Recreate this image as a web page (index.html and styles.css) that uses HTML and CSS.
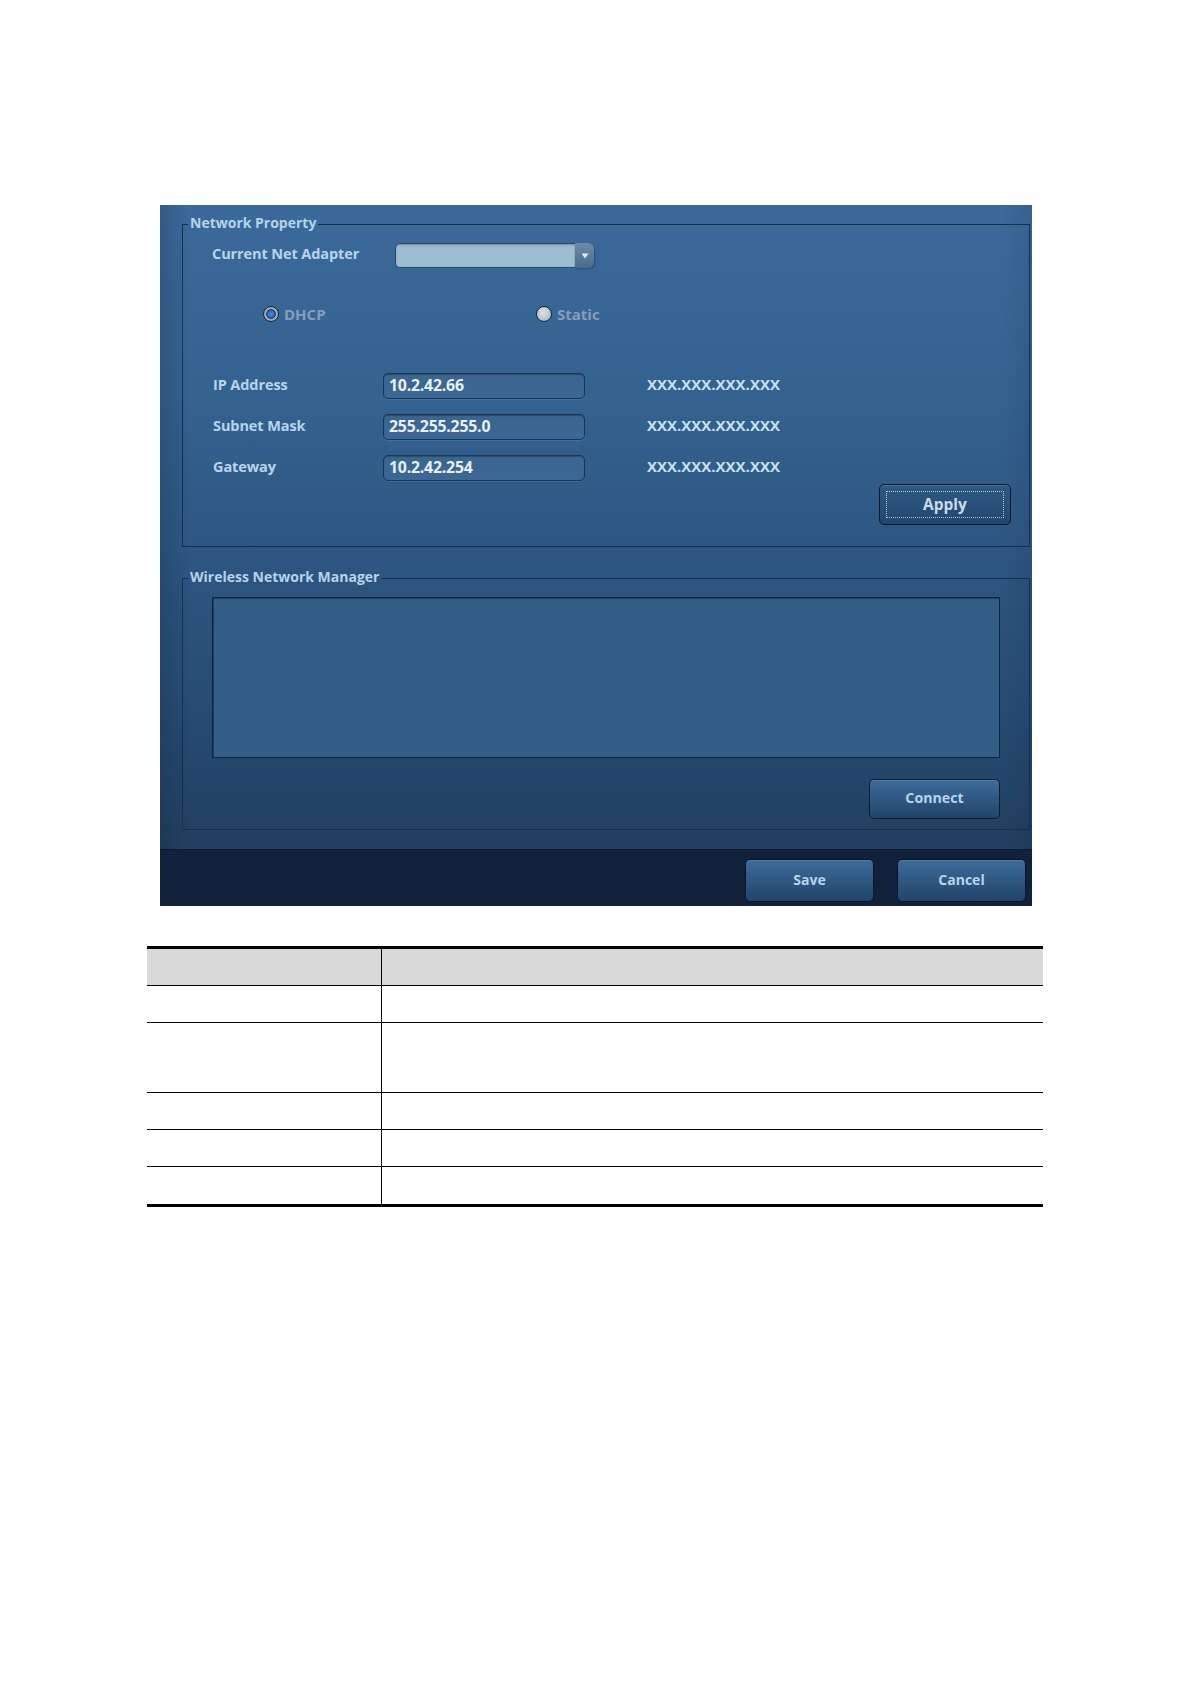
FILE: index.html
```html
<!DOCTYPE html>
<html lang="en">
<head>
<meta charset="utf-8">
<title>Network Property</title>
<link rel="stylesheet" href="styles.css">
</head>
<body>
<div class="page">
  <div class="dialog">
    <div class="dialog-main">
      <fieldset class="group group-net">
        <legend>Network Property</legend>
        <div class="adapter-row">
          <span class="label adapter-label">Current Net Adapter</span>
          <div class="combo">
            <span class="combo-field"></span>
            <span class="combo-btn"><svg width="8" height="6" viewBox="0 0 8 6"><path d="M0.5 0.5 H7.5 L4 5.5 Z" fill="#e4ecf3"/></svg></span>
          </div>
        </div>
        <div class="radio-row">
          <span class="radio radio-dhcp"><span class="radio-dot checked"></span>DHCP</span>
          <span class="radio"><span class="radio-dot"></span>Static</span>
        </div>
        <div class="ip-grid">
          <span class="label">IP Address</span>
          <span class="field">10.2.42.66</span>
          <span class="hint">XXX.XXX.XXX.XXX</span>
          <span class="label">Subnet Mask</span>
          <span class="field">255.255.255.0</span>
          <span class="hint">XXX.XXX.XXX.XXX</span>
          <span class="label">Gateway</span>
          <span class="field">10.2.42.254</span>
          <span class="hint">XXX.XXX.XXX.XXX</span>
        </div>
        <div class="apply-row">
          <button class="btn btn-apply"><span class="focus-ring">Apply</span></button>
        </div>
      </fieldset>
      <fieldset class="group group-wifi">
        <legend>Wireless Network Manager</legend>
        <div class="wifi-list"></div>
        <div class="connect-row">
          <button class="btn btn-connect">Connect</button>
        </div>
      </fieldset>
    </div>
    <div class="dialog-footer">
      <button class="btn btn-footer">Save</button>
      <button class="btn btn-footer">Cancel</button>
    </div>
  </div>

  <table class="param-table">
    <tr class="head"><td class="c1"></td><td class="c2"></td></tr>
    <tr><td class="c1"></td><td class="c2"></td></tr>
    <tr class="tall"><td class="c1"></td><td class="c2"></td></tr>
    <tr><td class="c1"></td><td class="c2"></td></tr>
    <tr><td class="c1"></td><td class="c2"></td></tr>
    <tr class="last"><td class="c1"></td><td class="c2"></td></tr>
  </table>
</div>
</body>
</html>
```

FILE: styles.css
```css
html, body {
  margin: 0;
  padding: 0;
  background: #ffffff;
}

body {
  font-family: "Open Sans", Lato, "DejaVu Sans", sans-serif;
}

.page {
  padding-top: 205px;
  width: 1190px;
}

/* ---------- dialog ---------- */
.dialog {
  margin-left: 160px;
  width: 872px;
  height: 701px;
  display: flex;
  flex-direction: column;
}

.dialog-main {
  height: 644px;
  box-sizing: border-box;
  padding-top: 10px;
  display: flex;
  flex-direction: column;
  background:
    linear-gradient(90deg, rgba(10, 25, 45, 0.18) 0, rgba(10, 25, 45, 0) 30px, rgba(10, 25, 45, 0) 842px, rgba(10, 25, 45, 0.1) 872px),
    linear-gradient(180deg, #3b6a9b 0%, #34628f 30%, #2d5681 55%, #284d74 75%, #213f60 100%);
}

.group {
  margin: 0 2px 0 22px;
  padding: 0;
  border: 1px solid #14304f;
  min-width: 0;
  box-sizing: border-box;
}

.group legend {
  margin-left: 5px;
  padding: 0 2px;
  line-height: 18px;
  font-size: 14px;
  font-weight: 700;
  color: #b6d3ea;
  position: relative;
  top: -1px;
}

.group-net {
  height: 332px;
}

.group-wifi {
  margin-top: 22px;
  height: 261px;
}

.label {
  font-size: 14.5px;
  font-weight: 700;
  color: #b8d4ea;
  white-space: nowrap;
  letter-spacing: -0.1px;
  position: relative;
  top: -2px;
}

/* adapter row */
.adapter-row {
  display: flex;
  align-items: center;
  height: 25px;
  margin-top: 10px;
  padding-left: 29px;
}

.adapter-label {
  flex: 0 0 183px;
}

.combo {
  display: flex;
  width: 199px;
  height: 25px;
}

.combo-field {
  flex: 1;
  box-sizing: border-box;
  background: #9cbccf;
  border: 1px solid #274a6c;
  border-right: none;
  border-radius: 5px 0 0 5px;
  box-shadow: inset 0 1px 2px rgba(0, 0, 0, 0.25);
}

.combo-btn {
  flex: 0 0 19px;
  display: flex;
  align-items: center;
  justify-content: center;
  background: linear-gradient(180deg, #6b8aa7, #4a6b8d);
  border-radius: 0 6px 6px 0;
  box-shadow: 1px 1px 2px rgba(0, 0, 0, 0.25);
}

/* radio row */
.radio-row {
  display: flex;
  align-items: center;
  height: 15px;
  margin-top: 38px;
  padding-left: 80px;
}

.radio {
  display: flex;
  align-items: center;
  gap: 5px;
  font-size: 15px;
  font-weight: 700;
  color: #869ebb;
}

.radio-dhcp {
  flex: 0 0 273px;
}

.radio-dot {
  width: 16px;
  height: 16px;
  box-sizing: border-box;
  border-radius: 50%;
  border: 1.5px solid #18273a;
  background: radial-gradient(circle at 45% 40%, #dfe2e5 0, #c3c8cd 50%, #a3abb4 100%);
}

.radio-dot.checked {
  background: radial-gradient(circle at 50% 50%, #4a8ae6 0, #2a66c8 3.4px, #1e2e40 4.4px, #a4aeb8 5.2px, #8b97a3 100%);
}

/* ip grid */
.ip-grid {
  display: grid;
  grid-template-columns: 170px 202px auto;
  grid-auto-rows: 26px;
  row-gap: 15px;
  align-items: center;
  margin-top: 52px;
  padding-left: 30px;
}

.field {
  height: 26px;
  box-sizing: border-box;
  display: flex;
  align-items: center;
  padding: 0 0 3px 5px;
  font-size: 15.8px;
  font-weight: 700;
  color: #e8f0f7;
  letter-spacing: -0.2px;
  background: linear-gradient(180deg, #3a6590, #3b6892);
  border: 1px solid #1a3556;
  border-radius: 5px;
  box-shadow: inset 0 1px 1px rgba(0, 0, 0, 0.25), 0 1px 0 rgba(120, 160, 200, 0.25);
}

.hint {
  margin-left: 62px;
  font-size: 15px;
  font-weight: 700;
  color: #c8e0f0;
  white-space: nowrap;
  position: relative;
  top: -2px;
}

/* buttons */
.btn {
  padding: 0 0 3px;
  box-sizing: border-box;
  font-family: "Open Sans", Lato, "DejaVu Sans", sans-serif;
  font-size: 14px;
  font-weight: 700;
  color: #b9d4ea;
  border: 1px solid #0d1c30;
  border-radius: 5px;
  background: linear-gradient(180deg, #3d6c9a 0%, #2d5680 55%, #224469 100%);
  box-shadow: inset 0 1px 0 rgba(255, 255, 255, 0.12);
  display: flex;
  align-items: center;
  justify-content: center;
}

.apply-row {
  display: flex;
  justify-content: flex-end;
  margin-top: 3px;
  padding-right: 18px;
}

.btn-apply {
  width: 132px;
  height: 41px;
  padding: 6px;
  font-size: 15.5px;
  color: #c6dced;
  border-color: #0a1626;
  background: linear-gradient(180deg, #2f5a84 0%, #284f78 60%, #21466c 100%);
}

.focus-ring {
  flex: 1;
  align-self: stretch;
  display: flex;
  align-items: center;
  justify-content: center;
  padding-bottom: 2px;
  border: 1px dotted rgba(205, 222, 238, 0.85);
}

.wifi-list {
  margin: 10px 0 0 29px;
  width: 788px;
  height: 161px;
  box-sizing: border-box;
  background: #325e88;
  border: 1px solid #10263f;
  box-shadow: inset 1px 1px 0 rgba(10, 25, 45, 0.5);
}

.connect-row {
  display: flex;
  justify-content: flex-end;
  margin-top: 21px;
  padding-right: 29px;
}

.btn-connect {
  width: 131px;
  height: 40px;
  font-size: 14.2px;
}

.dialog-footer {
  height: 57px;
  box-sizing: border-box;
  padding: 9px 6px 0 0;
  display: flex;
  justify-content: flex-end;
  gap: 23px;
  background: #11213a;
  border-top: 1px solid #0c1a2e;
}

.btn-footer {
  width: 129px;
  height: 43px;
  border-color: #0a1728;
}

/* ---------- table ---------- */
.param-table {
  margin: 40px 0 0 147px;
  width: 896px;
  border-spacing: 0;
  border-collapse: separate;
  border-top: 3px solid #000;
  border-bottom: 3px solid #000;
}

.param-table td {
  padding: 0;
  height: 36px;
  border-bottom: 1px solid #000;
}

.param-table .c1 {
  width: 234px;
  border-right: 1px solid #000;
}

.param-table .head td {
  background: #d9d9d9;
}

.param-table .tall td {
  height: 69px;
}

.param-table .last td {
  height: 37px;
  border-bottom: none;
}
```
